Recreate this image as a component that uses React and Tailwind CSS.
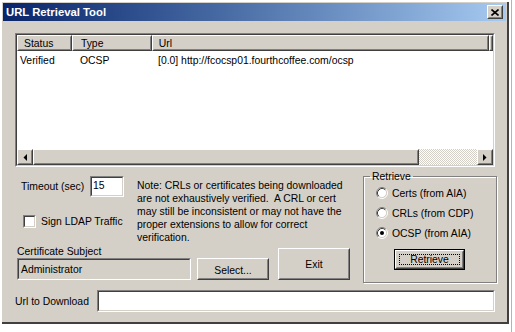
import React from 'react';

const Raised = ({ className = '', inner = '', children }) => (
    <div className={`border border-t-white border-l-white border-r-[#404040] border-b-[#404040] bg-[#d4d0c8] ${className}`}>
        <div className={`w-full h-full border border-t-[#d4d0c8] border-l-[#d4d0c8] border-r-[#808080] border-b-[#808080] flex items-center justify-center ${inner}`}>
            {children}
        </div>
    </div>
);

const Sunken = ({ className = '', inner = '', children }) => (
    <div className={`border border-t-[#808080] border-l-[#808080] border-r-white border-b-white ${className}`}>
        <div className={`w-full h-full border border-t-[#404040] border-l-[#404040] border-r-[#d4d0c8] border-b-[#d4d0c8] ${inner}`}>
            {children}
        </div>
    </div>
);

const Radio = ({ checked }) => (
    <svg width="12" height="12" viewBox="0 0 12 12" className="shrink-0">
        <circle cx="6" cy="6" r="4.5" fill="#ffffff" />
        <path d="M2.11 9.89 A5.5 5.5 0 0 1 9.89 2.11" fill="none" stroke="#808080" />
        <path d="M9.89 2.11 A5.5 5.5 0 0 1 2.11 9.89" fill="none" stroke="#ffffff" />
        <path d="M2.82 9.18 A4.5 4.5 0 0 1 9.18 2.82" fill="none" stroke="#404040" />
        <path d="M9.18 2.82 A4.5 4.5 0 0 1 2.82 9.18" fill="none" stroke="#d4d0c8" />
        {checked && <circle cx="6" cy="6" r="2" fill="#000000" />}
    </svg>
);

const HeaderCell = ({ w, pl, children }) => (
    <Raised className={`${w} h-full`} inner={`justify-start ${pl}`}>
        <span>{children}</span>
    </Raised>
);

const App = () => {
    return (
        <div className="w-[515px] h-[332px] bg-white overflow-hidden flex font-['Liberation_Sans',Arial,sans-serif] text-[10.4px] leading-[13px] text-black">
            {/* window */}
            <div className="ml-[2px] mt-[2px] w-[507px] h-[322px] bg-[#d4d0c8] border-r-2 border-b-2 border-[#404040] p-[1px] pb-0 flex flex-col">
                {/* title bar */}
                <div className="h-[18px] flex items-center justify-between pl-[3px] pr-[3px] bg-linear-to-r from-[#0a246a] to-[#a6caf0]">
                    <span className="text-white font-bold text-[11.3px]">URL Retrieval Tool</span>
                    <Raised className="w-[16px] h-[14px]">
                        <svg width="8" height="7" viewBox="0 0 8 7">
                            <path d="M0.5 0.5 L7.5 6.5 M7.5 0.5 L0.5 6.5" stroke="#000" strokeWidth="1.6" />
                        </svg>
                    </Raised>
                </div>

                <div className="flex-1 flex flex-col pl-[12px] pt-[12px]">
                    {/* list view */}
                    <Sunken className="w-[480px] h-[134px]" inner="bg-white flex flex-col">
                        <div className="flex h-[16px]">
                            <HeaderCell w="w-[55px]" pl="pl-[5px]">Status</HeaderCell>
                            <HeaderCell w="w-[80px]" pl="pl-[7px]">Type</HeaderCell>
                            <HeaderCell w="w-[338px]" pl="pl-[5px]">Url</HeaderCell>
                            <Raised className="flex-1 h-full" />
                        </div>
                        <div className="flex-1">
                            <div className="flex h-[14px] mt-[2px] items-center">
                                <span className="w-[55px] pl-[3px]">Verified</span>
                                <span className="w-[80px] pl-[8px]">OCSP</span>
                                <span className="pl-[6px]">[0.0] http://fcocsp01.fourthcoffee.com/ocsp</span>
                            </div>
                        </div>
                        <div className="flex h-[16px]">
                            <Raised className="w-[16px] h-full">
                                <svg width="4" height="7" viewBox="0 0 4 7"><polygon points="4,0 4,7 0.5,3.5" fill="#000" /></svg>
                            </Raised>
                            <Raised className="w-[386px] h-full" />
                            <div className="flex-1 bg-[repeating-conic-gradient(#ffffff_0%_25%,#d4d0c8_0%_50%)] bg-[length:2px_2px]" />
                            <Raised className="w-[16px] h-full">
                                <svg width="4" height="7" viewBox="0 0 4 7"><polygon points="0,0 0,7 3.5,3.5" fill="#000" /></svg>
                            </Raised>
                        </div>
                    </Sunken>

                    {/* middle section */}
                    <div className="flex mt-[3px]">
                        <div className="w-[333px] ml-[2px] pt-[6px] flex flex-col">
                            <div className="flex h-[69px]">
                                <div className="w-[120px] flex flex-col">
                                    <div className="flex items-center h-[21px]">
                                        <span className="w-[73px] pl-[4px]">Timeout (sec)</span>
                                        <Sunken className="w-[34px] h-[21px]" inner="bg-white pl-[1px] pt-[1px]">15</Sunken>
                                    </div>
                                    <div className="flex items-center h-[13px] mt-[18px] pl-[6px]">
                                        <Sunken className="w-[13px] h-[13px]" inner="bg-white" />
                                        <span className="ml-[5px]">Sign LDAP Traffic</span>
                                    </div>
                                </div>
                                <div className="pt-[3px] whitespace-pre">
                                    <div>Note: CRLs or certificates being downloaded</div>
                                    <div>are not exhaustively verified.  A CRL or cert</div>
                                    <div>may still be inconsistent or may not have the</div>
                                    <div>proper extensions to allow for correct</div>
                                    <div>verification.</div>
                                </div>
                            </div>
                            <div className="flex items-end h-[35px]">
                                <div className="w-[174px] flex flex-col">
                                    <span>Certificate Subject</span>
                                    <Sunken className="w-[174px] h-[22px]" inner="bg-[#d4d0c8] pl-[2px] flex items-center">
                                        Administrator
                                    </Sunken>
                                </div>
                                <Raised className="ml-[6px] w-[72px] h-[22px]" inner="pt-[3px]">Select...</Raised>
                                <Raised className="ml-[9px] w-[72px] h-[32px]">Exit</Raised>
                            </div>
                        </div>

                        <fieldset className="ml-[13px] w-[134px] h-[113px] border border-[#808080] shadow-[inset_1px_1px_0_#ffffff,1px_1px_0_#ffffff]">
                            <legend className="ml-[6px] px-[2px]">Retrieve</legend>
                            <div className="flex flex-col pl-[12px]">
                                <div className="flex items-center h-[20px]">
                                    <Radio />
                                    <span className="ml-[4px]">Certs (from AIA)</span>
                                </div>
                                <div className="flex items-center h-[20px]">
                                    <Radio />
                                    <span className="ml-[4px]">CRLs (from CDP)</span>
                                </div>
                                <div className="flex items-center h-[20px]">
                                    <Radio checked />
                                    <span className="ml-[4px]">OCSP (from AIA)</span>
                                </div>
                                <div className="mt-[6px] ml-[18px] w-[71px] h-[21px] border border-black">
                                    <Raised className="w-full h-full" inner="p-[2px]">
                                        <div className="w-full h-full border border-dotted border-black flex items-center justify-center">Retrieve</div>
                                    </Raised>
                                </div>
                            </div>
                        </fieldset>
                    </div>

                    {/* url row */}
                    <div className="flex items-center h-[22px] mt-[7px]">
                        <span className="w-[82px]">Url to Download</span>
                        <Sunken className="w-[398px] h-[22px]" inner="bg-white" />
                    </div>
                </div>
            </div>
            <div className="ml-[2px] w-px h-full bg-[#b4b4b4]" />
        </div>
    );
};

export default App;
